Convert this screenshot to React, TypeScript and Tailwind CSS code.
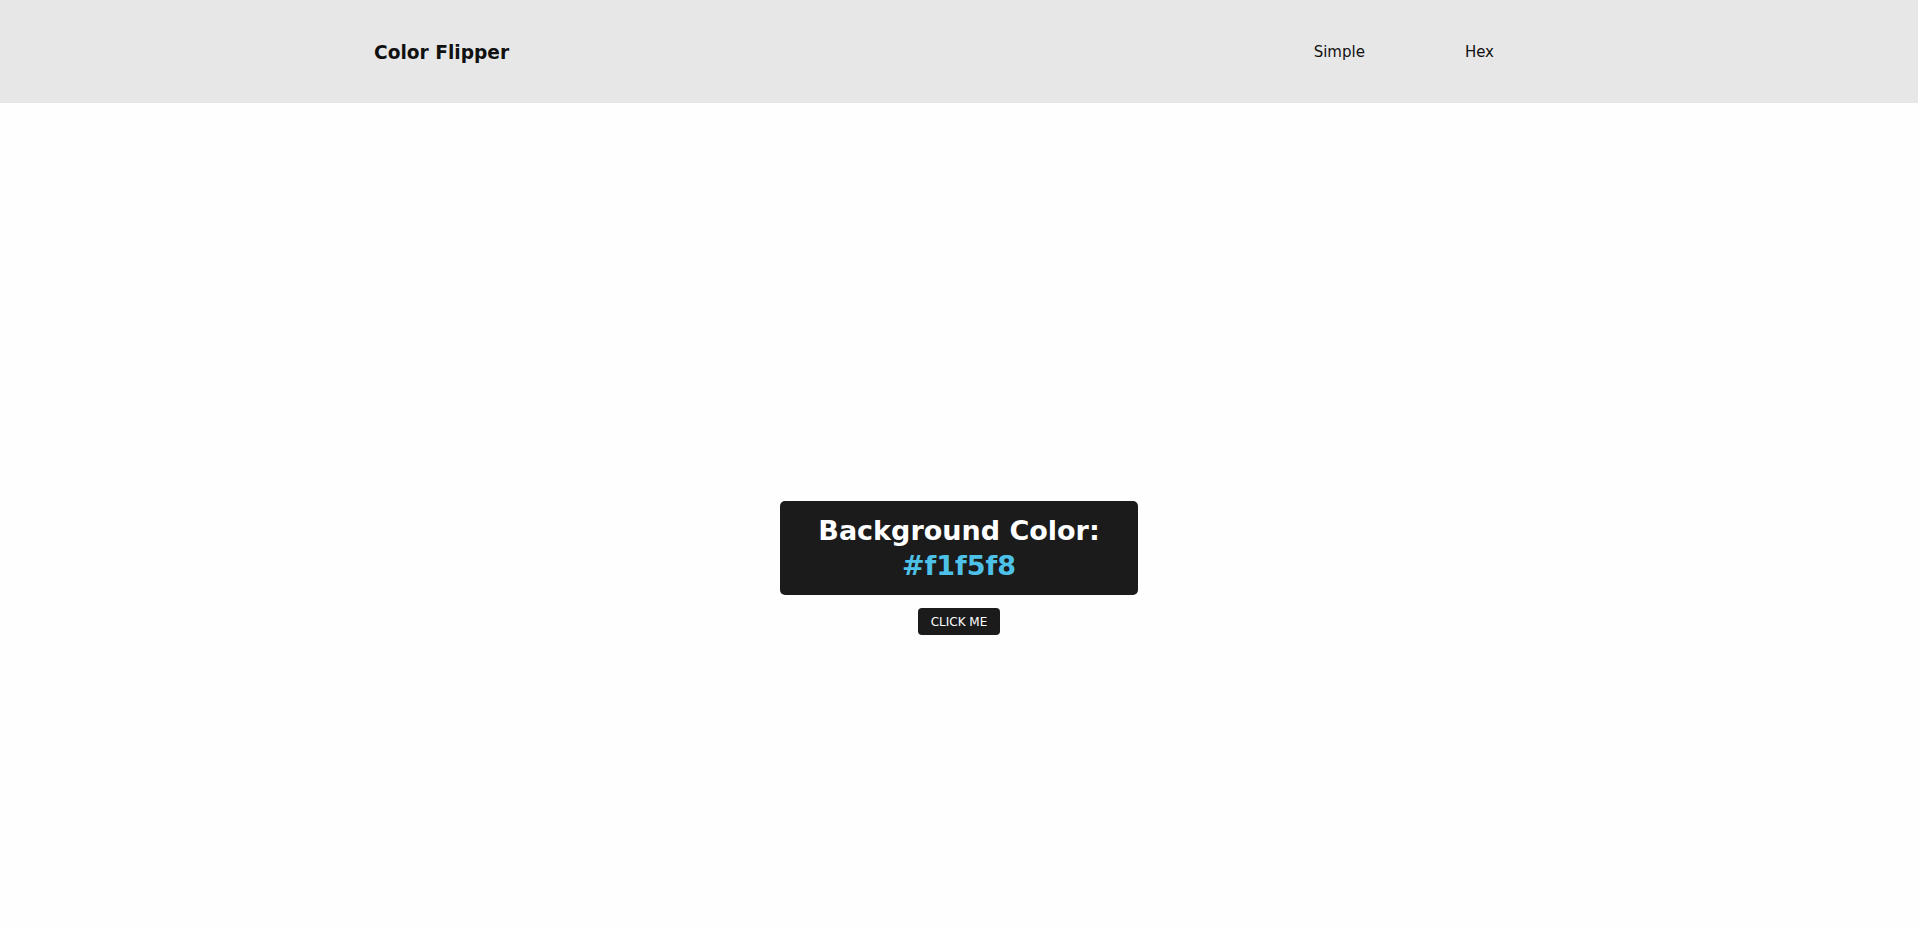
export default function App() {
  return (
    <div className="bg-[#fefefe]" style={{ fontFamily: '"DejaVu Sans", "Liberation Sans", sans-serif' }}>
      <nav className="h-[103px] bg-[#e7e7e7]">
        <div className="mx-auto flex h-full w-[1170px] items-center justify-between pt-[2px]">
          <h4 className="text-[18.6px] font-bold text-[#111]">Color Flipper</h4>
          <ul className="flex text-[15px] text-[#111]">
            <li><a className="block px-[50px]">Simple</a></li>
            <li><a className="block px-[50px]">Hex</a></li>
          </ul>
        </div>
      </nav>
      <main className="flex min-h-[927px] flex-col items-center justify-center">
        <div className="flex flex-col items-center pt-[3px]">
          <h2 className="w-[358px] rounded-[5px] bg-[#1b1b1b] py-[12px] text-center text-[27px] font-bold leading-[35px] text-white">
            Background Color:
            <br />
            <span className="text-[#4ec1e8]">#f1f5f8</span>
          </h2>
          <button className="mt-[13px] h-[27px] w-[82px] rounded-[4px] bg-[#1b1b1b] text-[12px] text-white">
            CLICK ME
          </button>
        </div>
      </main>
    </div>
  );
}
